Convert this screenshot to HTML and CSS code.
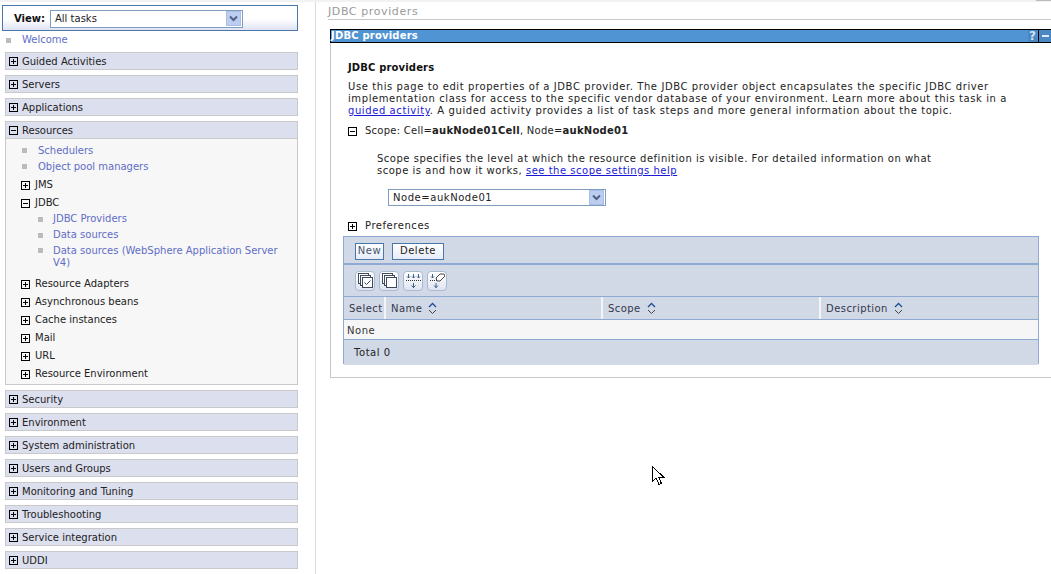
FILE: index.html
```html
<!DOCTYPE html>
<html lang="en">
<head>
<meta charset="utf-8">
<title>JDBC providers</title>
<link rel="stylesheet" href="styles.css">
</head>
<body>
<svg width="0" height="0" class="defs">
  <symbol id="plus" viewBox="0 0 9 9"><path d="M.5.5h8v8h-8zM2 4.5h5M4.5 2v5" fill="#fff" stroke="#000" shape-rendering="crispEdges"/></symbol>
  <symbol id="minus" viewBox="0 0 9 9"><path d="M.5.5h8v8h-8zM2 4.5h5" fill="#fff" stroke="#000" shape-rendering="crispEdges"/></symbol>
  <symbol id="plusb" viewBox="0 0 9 9"><path d="M.5.5h8v8h-8zM2 4.5h5M4.5 2v5" fill="none" stroke="#000" shape-rendering="crispEdges"/></symbol>
  <symbol id="minusb" viewBox="0 0 9 9"><path d="M.5.5h8v8h-8zM2 4.5h5" fill="none" stroke="#000" shape-rendering="crispEdges"/></symbol>
  <symbol id="chev" viewBox="0 0 15 15"><rect x=".5" y=".5" width="14" height="14" fill="#bccdf0" stroke="#a9bde6"/><path d="M4 5.500l3.500 3.500L11 5.500" fill="none" stroke="#4d6185" stroke-width="2"/></symbol>
  <symbol id="sort" viewBox="0 0 9 13"><path d="M1 5l3.500-3.500L8 5" fill="none" stroke="#1f4c96" stroke-width="1.300"/><path d="M1 8l3.500 3.500L8 8" fill="none" stroke="#444"/></symbol>
</svg>
<div class="page">
  <nav class="side">
    <div class="view">
      <span class="view-label">View:</span>
      <div class="select view-select"><span>All tasks</span><svg class="chev"><use href="#chev"/></svg></div>
    </div>
    <div class="welcome"><i class="sq"></i><a class="nav-link">Welcome</a></div>

    <div class="sec"><svg class="tg"><use href="#plusb"/></svg>Guided Activities</div>
    <div class="sec"><svg class="tg"><use href="#plusb"/></svg>Servers</div>
    <div class="sec"><svg class="tg"><use href="#plusb"/></svg>Applications</div>
    <div class="group">
      <div class="sec sec-open"><svg class="tg"><use href="#minusb"/></svg>Resources</div>
      <div class="group-body">
        <div class="leaf"><i class="sq"></i><a class="nav-link">Schedulers</a></div>
        <div class="leaf"><i class="sq"></i><a class="nav-link">Object pool managers</a></div>
        <div class="node node-first"><svg class="tg"><use href="#plusb"/></svg>JMS</div>
        <div class="node"><svg class="tg"><use href="#minusb"/></svg>JDBC</div>
        <div class="sub"><i class="sq"></i><a class="nav-link">JDBC Providers</a></div>
        <div class="sub"><i class="sq"></i><a class="nav-link">Data sources</a></div>
        <div class="sub sub-wrap"><i class="sq"></i><a class="nav-link">Data sources (WebSphere Application Server<br>V4)</a></div>
        <div class="node"><svg class="tg"><use href="#plusb"/></svg>Resource Adapters</div>
        <div class="node"><svg class="tg"><use href="#plusb"/></svg>Asynchronous beans</div>
        <div class="node"><svg class="tg"><use href="#plusb"/></svg>Cache instances</div>
        <div class="node"><svg class="tg"><use href="#plusb"/></svg>Mail</div>
        <div class="node"><svg class="tg"><use href="#plusb"/></svg>URL</div>
        <div class="node"><svg class="tg"><use href="#plusb"/></svg>Resource Environment</div>
      </div>
    </div>
    <div class="sec"><svg class="tg"><use href="#plusb"/></svg>Security</div>
    <div class="sec"><svg class="tg"><use href="#plusb"/></svg>Environment</div>
    <div class="sec"><svg class="tg"><use href="#plusb"/></svg>System administration</div>
    <div class="sec"><svg class="tg"><use href="#plusb"/></svg>Users and Groups</div>
    <div class="sec"><svg class="tg"><use href="#plusb"/></svg>Monitoring and Tuning</div>
    <div class="sec"><svg class="tg"><use href="#plusb"/></svg>Troubleshooting</div>
    <div class="sec"><svg class="tg"><use href="#plusb"/></svg>Service integration</div>
    <div class="sec"><svg class="tg"><use href="#plusb"/></svg>UDDI</div>
  </nav>

  <main class="main">
    <div class="crumb">JDBC providers</div>
    <section class="panel">
      <header class="panel-bar">
        <span class="panel-title">JDBC providers</span>
        <span class="bar-btn bar-help">?</span>
        <span class="bar-btn bar-min"><i></i></span>
      </header>
      <div class="panel-body">
        <h1 class="title">JDBC providers</h1>
        <p class="desc">Use this page to edit properties of a JDBC provider. The JDBC provider object encapsulates the specific JDBC driver<br>implementation class for access to the specific vendor database of your environment. Learn more about this task in a<br><a class="link">guided activity</a>. A guided activity provides a list of task steps and more general information about the topic.</p>
        <div class="scope"><svg class="tg"><use href="#minus"/></svg><span>Scope: Cell=<b>aukNode01Cell</b>, Node=<b>aukNode01</b></span></div>
        <p class="scope-help">Scope specifies the level at which the resource definition is visible. For detailed information on what<br>scope is and how it works, <a class="link">see the scope settings help</a></p>
        <div class="select scope-select"><span>Node=aukNode01</span><svg class="chev"><use href="#chev"/></svg></div>
        <div class="prefs"><svg class="tg"><use href="#plus"/></svg><span>Preferences</span></div>
        <div class="tbl">
          <div class="tbar tbar-btns"><button class="btn btn-new">New</button><button class="btn btn-del">Delete</button></div>
          <div class="tbar tbar-icons">
            <span class="ico"><svg width="15" height="15" viewBox="0 0 15 15" fill="#fff" stroke="#3d4a5c"><rect x=".5" y=".5" width="10" height="10"/><rect x="2.500" y="2.500" width="10" height="10"/><rect x="4.500" y="4.500" width="10" height="10"/><path d="M6.500 9.500l2 2 4-4" fill="none"/></svg></span>
            <span class="ico"><svg width="15" height="15" viewBox="0 0 15 15" fill="#fff" stroke="#3d4a5c"><rect x=".5" y=".5" width="10" height="10"/><rect x="2.500" y="2.500" width="10" height="10"/><rect x="4.500" y="4.500" width="10" height="10"/></svg></span>
            <span class="ico"><svg width="15" height="15" viewBox="0 0 15 15" fill="none" stroke="#3d5f8c"><path d="M2.500 1v4M1 3.500l1.500 1.500L4 3.500M7.500 1v4M6 3.500L7.500 5 9 3.500M12.500 1v4M11 3.500L12.500 5 14 3.500M7.500 10v5M5.500 12.500l2 2 2-2"/><path d="M0 7.500h15" stroke-dasharray="1 1" stroke="#333"/></svg></span>
            <span class="ico"><svg width="15" height="15" viewBox="0 0 15 15" fill="none" stroke="#3d5f8c"><path d="M2.500 1v4M1 3.500l1.500 1.500L4 3.500M6 10v5M4 12.500l2 2 2-2"/><path d="M0 7.500h7" stroke-dasharray="1 1" stroke="#333"/><path d="M6 5l4-4h4l1 2-5 5H7z" fill="#fff" stroke="#444"/></svg></span>
          </div>
          <div class="thead">
            <div class="th th-select">Select</div>
            <div class="th th-name">Name<svg class="sort"><use href="#sort"/></svg></div>
            <div class="th th-scope">Scope<svg class="sort"><use href="#sort"/></svg></div>
            <div class="th th-desc">Description<svg class="sort"><use href="#sort"/></svg></div>
          </div>
          <div class="none">None</div>
          <div class="total">Total 0</div>
        </div>
      </div>
    </section>
  </main>
</div>
<div class="corner"></div>
<svg class="cursor" width="14" height="22" viewBox="0 0 14 22"><path d="M1.500 1.500v15l3.500-3.500 3 6.500 2.500-1-3-6.500h5z" fill="#fff" stroke="#000" shape-rendering="crispEdges"/></svg>
</body>
</html>
```
FILE: styles.css
```css
* { box-sizing: border-box; }
html, body { margin: 0; height: 100%; overflow: hidden; }
body {
  background: #fff;
  color: #222;
  font: 10px/12px "DejaVu Sans", Verdana, sans-serif;
  position: relative;
}
.defs { position: absolute; }
.corner { position: absolute; right: 0; top: 0; width: 15px; height: 1px; background: #bbb; }
.page {
  display: grid;
  grid-template-columns: 316px 1fr;
  height: 574px;
  border-top: 2px solid #f2f2f2;
}
.side {
  border-right: 1px solid #dcdcdc;
  padding: 3px 17px 0 5px;
  overflow: hidden;
}
.sq { display: inline-block; width: 5px; height: 5px; background: #bbb; flex: none; }
.nav-link { color: #5f6dc6; }
.view {
  display: flex;
  align-items: center;
  height: 26px;
  margin-left: -3px;
  padding: 1px 0 0 11px;
  border: 1px solid #4a78aa;
  background: linear-gradient(#fff 55%, #dfe4f3);
}
.view-label { font-weight: bold; color: #111; width: 36px; }
.select {
  display: flex;
  align-items: center;
  justify-content: space-between;
  background: #fff;
  border: 1px solid #7e9dbf;
  color: #222;
  padding: 0 1px 0 4px;
}
.view-select { width: 193px; height: 18px; }
.chev { width: 15px; height: 15px; }
.welcome { display: flex; align-items: center; gap: 11px; height: 12px; margin: 3px 0 6px 1px; }
.sec {
  display: flex;
  align-items: center;
  height: 18px;
  margin-bottom: 5px;
  padding: 1px 0 0 3px;
  background: #dcdfee;
  border: 1px solid #c9c9c9;
  color: #222;
  white-space: nowrap;
}
.tg { width: 9px; height: 9px; flex: none; margin-right: 4px; }
.group { margin-bottom: 5px; border: 1px solid #c9c9c9; border-top: 0; background: #f7f7f7; height: 264px; }
.sec-open { margin: 0 -1px; }
.group-body { padding: 4px 0 0 17px; }
.leaf { display: flex; align-items: center; gap: 11px; height: 16px; margin-left: -1px; }
.leaf .sq { margin-top: -1px; }
.node { display: flex; align-items: center; height: 18px; margin-left: -2px; white-space: nowrap; }
.node-first { margin-top: 1px; }
.node .tg { margin-right: 5px; }
.sub { display: flex; align-items: center; gap: 10px; height: 16px; margin-left: 15px; white-space: nowrap; }
.node + .sub { margin-top: -1px; }
.sub-wrap { height: 24px; align-items: flex-start; margin-top: 2px; margin-bottom: 6px; }
.sub-wrap .sq { margin-top: 3px; }
.main { padding: 4px 0 0 12px; min-width: 0; }
.crumb {
  height: 13px;
  color: #999;
  font-size: 11px;
  line-height: 12px;
  letter-spacing: .6px;
  border-bottom: 1px solid #c8c8c8;
  box-sizing: content-box;
}
.panel {
  margin: 9px 0 0 2px;
  height: 349px;
  border-left: 1px solid #c8c8c8;
  border-bottom: 1px solid #c8c8c8;
}
.panel-bar {
  display: flex;
  align-items: center;
  height: 14px;
  margin-left: -1px;
  background: #5094d4;
  border: 1px solid #000;
  border-width: 1px 0 1px 1px;
  color: #fff;
}
.panel-title { font-weight: bold; flex: 1; letter-spacing: .2px; }
.bar-btn { height: 12px; text-align: center; background: #4b87c0; color: #cfe3f7; font-weight: bold; line-height: 12px; }
.bar-help { width: 9px; font-size: 12px; margin-right: 1px; }
.bar-min { width: 13px; border-left: 1px solid #000; display: flex; align-items: center; justify-content: center; }
.bar-min i { display: block; width: 7px; height: 2px; background: #dce9f7; }
.panel-body { padding: 0 12px; letter-spacing: .55px; }
.title { margin: 19px 0 0 5px; font: bold 10px/12px "DejaVu Sans", Verdana, sans-serif; letter-spacing: .15px; color: #111; }
.desc { margin: 7px 0 0 5px; color: #222; white-space: nowrap; letter-spacing: .59px; }
.link { color: #1a1ad6; text-decoration: underline; }
.scope { display: flex; align-items: center; margin: 8px 0 0 5px; height: 12px; letter-spacing: .25px; }
.scope b { color: #222; }
.scope .tg { margin-right: 8px; }
.scope-help { margin: 16px 0 0 34px; white-space: nowrap; letter-spacing: .51px; }
.scope-select { width: 218px; height: 17px; margin: 12px 0 0 45px; }
.prefs { display: flex; align-items: center; height: 12px; margin: 14px 0 0 5px; }
.prefs .tg { margin-right: 8px; }
.tbl {
  margin-top: 4px;
  width: 696px;
  height: 128px;
  border: 1px solid #8eaad2;
  display: flex;
  flex-direction: column;
  background: #fff;
}
.tbar { background: #d1d8e6; display: flex; align-items: center; }
.tbar-btns { height: 28px; gap: 8px; padding: 2px 0 0 11px; border-bottom: 2px solid #8eaad2; flex: none; }
.btn {
  font: 10px/12px "DejaVu Sans", Verdana, sans-serif;
  letter-spacing: .55px;
  color: #222;
  background: linear-gradient(#fff, #e6ecf8);
  border: 1px solid #4a78aa;
  height: 17px;
  padding: 0;
}
.btn-new { width: 29px; color: #44546a; }
.btn-del { width: 52px; }
.tbar-icons { height: 32px; padding-left: 11px; gap: 5px; border-bottom: 1px solid #8eaad2; flex: none; }
.ico {
  width: 20px;
  height: 20px;
  display: flex;
  align-items: center;
  justify-content: center;
  border: 1px solid #a9bbd4;
  border-radius: 4px;
  background: linear-gradient(#fff, #dfe5f1);
}
.ico + .ico { margin-left: -1px; }
.thead { display: flex; height: 23px; flex: none; background: #d1d8e6; border-bottom: 1px solid #8eaad2; }
.th { display: flex; align-items: center; padding: 1px 0 0 5px; letter-spacing: .45px; border-right: 2px solid #f2f4f8; color: #33394a; }
.th-select { width: 42px; }
.th-name { width: 217px; }
.th-scope { width: 218px; }
.th-desc { flex: 1; border-right: 0; }
.sort { width: 9px; height: 13px; margin-left: 6px; }
.none { height: 20px; flex: none; padding-left: 3px; line-height: 21px; background: #f6f6f6; border-bottom: 1px solid #8eaad2; color: #333; }
.total { flex: 1; background: #d1d8e6; padding-left: 10px; line-height: 25px; color: #222; }
.cursor { position: absolute; left: 651px; top: 465px; }
```
